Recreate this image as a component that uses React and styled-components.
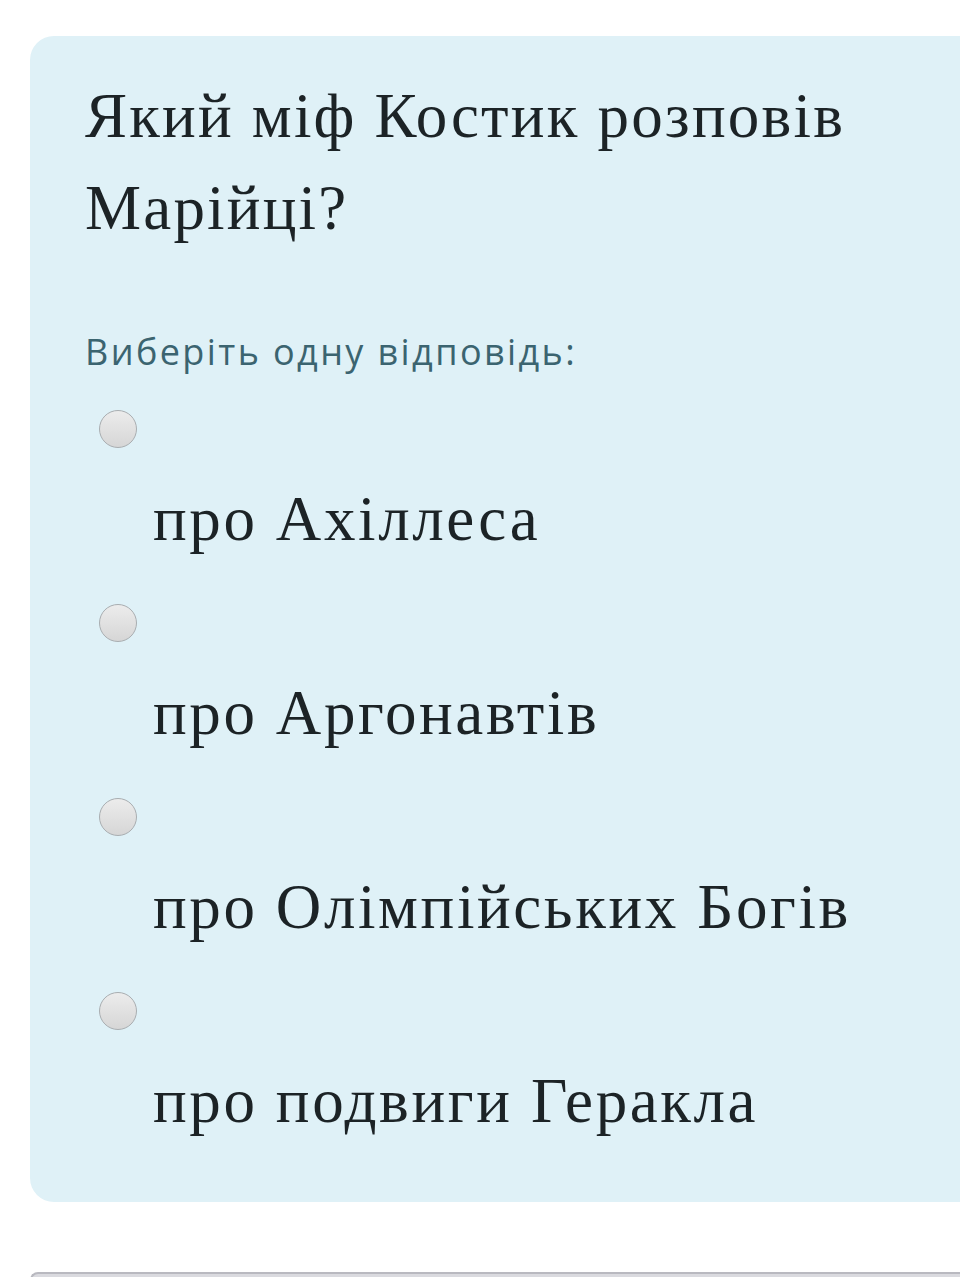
import styled, { createGlobalStyle } from "styled-components";

const Global = createGlobalStyle`
  html, body {
    margin: 0;
    padding: 0;
    background: #ffffff;
    overflow-x: hidden;
  }
`;

const options = [
  "про Ахіллеса",
  "про Аргонавтів",
  "про Олімпійських Богів",
  "про подвиги Геракла",
];

export default function App() {
  return (
    <Page>
      <Global />
      <Card>
        <Question>Який міф Костик розповів Марійці?</Question>
        <Prompt>Виберіть одну відповідь:</Prompt>
        <Answers>
          {options.map((text) => (
            <Answer key={text}>
              <Radio type="radio" name="answer" />
              <Label>{text}</Label>
            </Answer>
          ))}
        </Answers>
      </Card>
      <Footer />
    </Page>
  );
}

const Page = styled.div`
  padding-top: 36px;
  height: 1277px;
  box-sizing: border-box;
  overflow: hidden;
`;

const Card = styled.div`
  margin-left: 30px;
  margin-right: -40px;
  background: #dff1f7;
  border-radius: 24px;
  padding: 34px 0 55px 55px;
`;

const Question = styled.h2`
  margin: 0;
  width: 800px;
  font-family: "Liberation Serif", "DejaVu Serif", serif;
  font-weight: normal;
  font-size: 63px;
  line-height: 92px;
  letter-spacing: 2.2px;
  color: #1c2326;
`;

const Prompt = styled.div`
  margin-top: 73px;
  font-family: "Open Sans", "Noto Sans", sans-serif;
  font-size: 36px;
  line-height: 50px;
  letter-spacing: 2.4px;
  color: #3b6470;
`;

const Answers = styled.div`
  display: flex;
  flex-direction: column;
  gap: 39px;
  margin-top: 33px;
`;

const Answer = styled.div`
  display: flex;
  flex-direction: column;
  align-items: flex-start;
`;

const Radio = styled.input`
  appearance: none;
  margin: 0 0 0 14px;
  width: 38px;
  height: 38px;
  border-radius: 50%;
  border: 1.5px solid #a9adb0;
  background: linear-gradient(#ececec, #d6d6d6);
  box-sizing: border-box;
`;

const Label = styled.span`
  margin: 25px 0 0 68px;
  font-family: "Liberation Serif", "DejaVu Serif", serif;
  font-size: 63px;
  line-height: 92px;
  letter-spacing: 2.6px;
  color: #1c2326;
`;

const Footer = styled.div`
  margin: 70px 0 0 30px;
  height: 40px;
  background: #dadadf;
  border-top: 2px solid #b9b9c0;
  border-left: 2px solid #b9b9c0;
  border-top-left-radius: 8px;
`;
